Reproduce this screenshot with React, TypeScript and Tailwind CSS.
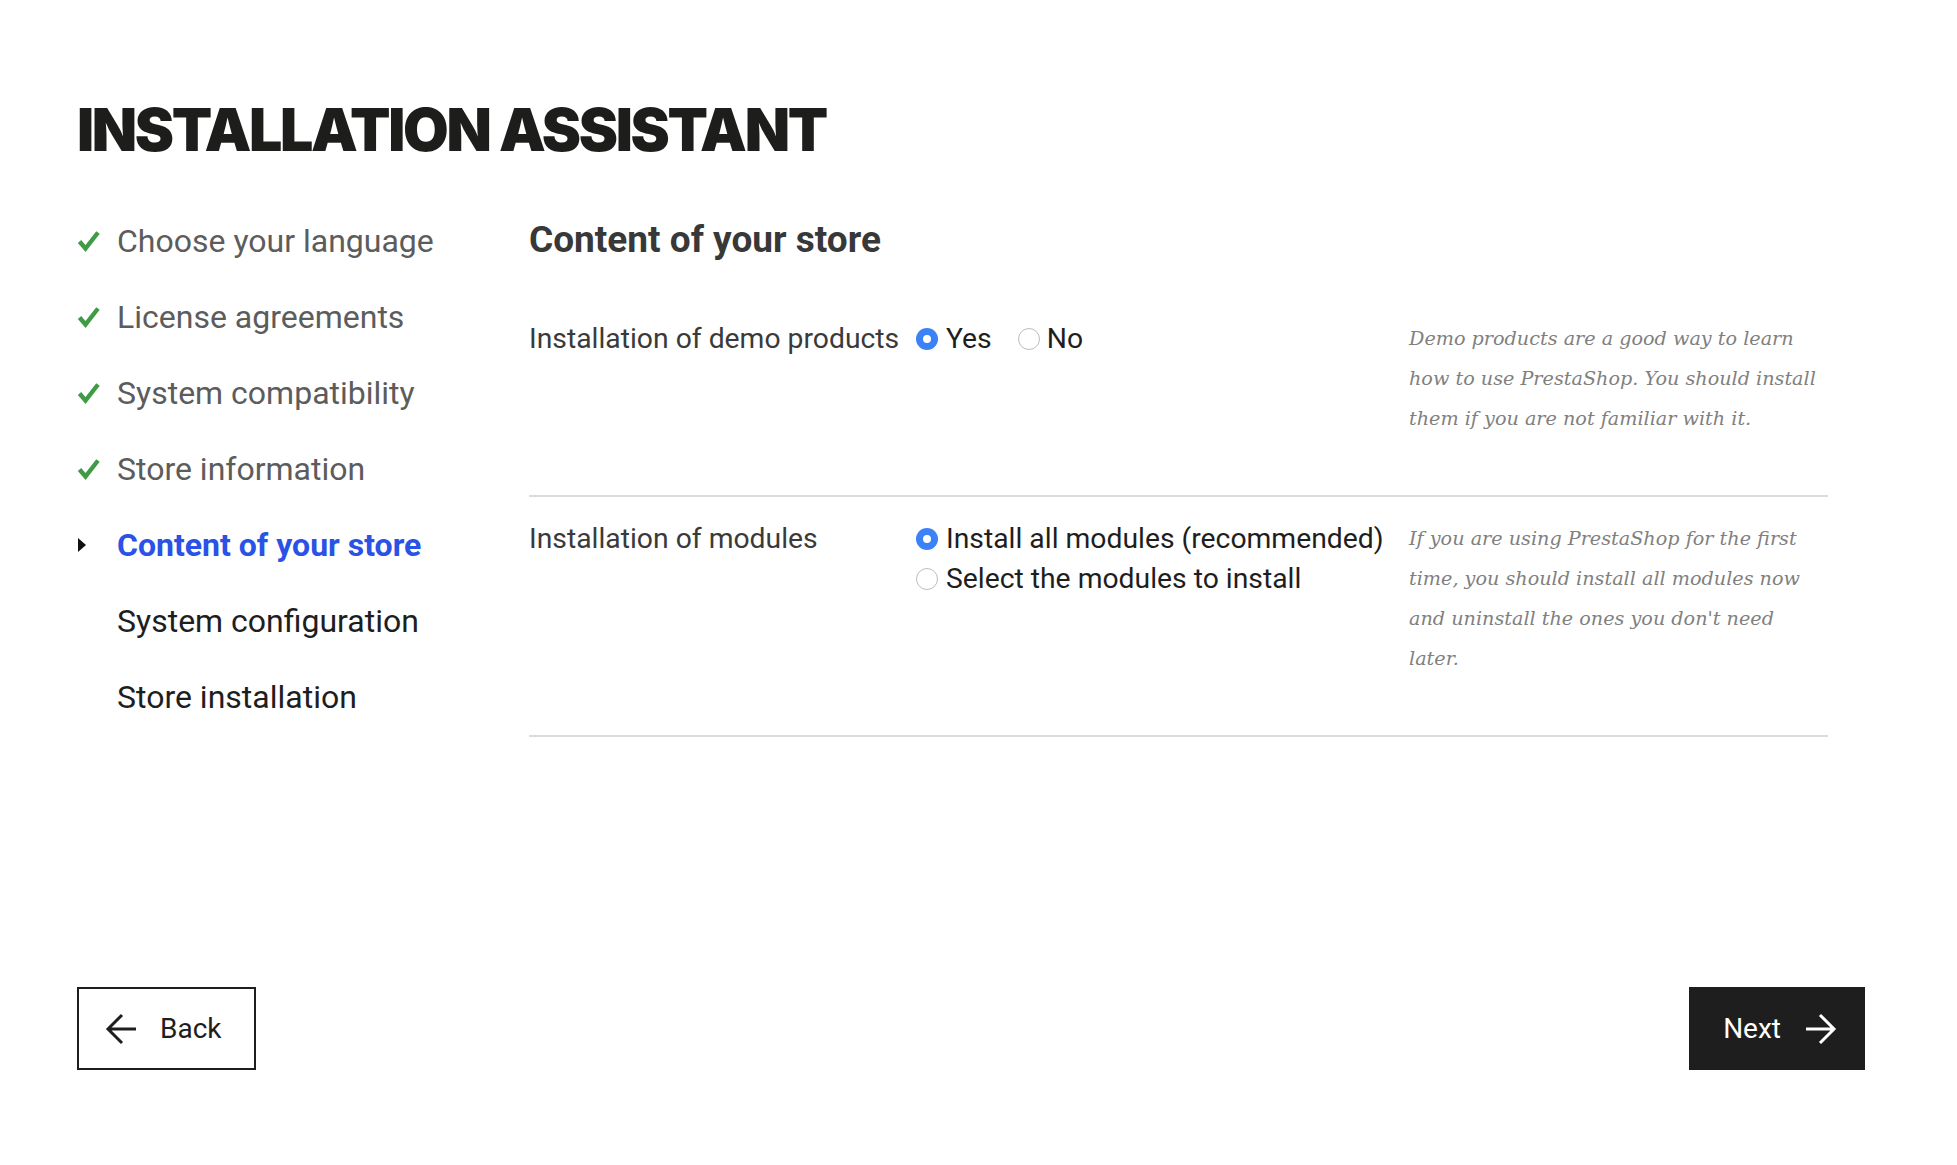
import React from "react";

const sans = { fontFamily: "Roboto, 'Noto Sans', sans-serif" };
const serif = { fontFamily: "'DejaVu Serif', 'Liberation Serif', serif" };

function Check() {
  return (
    <svg width="24" height="24" viewBox="0 0 24 24">
      <path d="M2.5 12.5 L8.5 19.5 L21 3.5" fill="none" stroke="#3f9b45" strokeWidth="4.4" strokeLinecap="butt" strokeLinejoin="miter" />
    </svg>
  );
}

function Triangle() {
  return (
    <svg width="10" height="14" viewBox="0 0 10 14">
      <path d="M1 0 L9 7 L1 14 Z" fill="#111" />
    </svg>
  );
}

function Radio({ checked }: { checked: boolean }) {
  if (checked) {
    return (
      <span className="flex h-[22px] w-[22px] shrink-0 items-center justify-center rounded-full bg-[#3b82f6]">
        <span className="h-[8px] w-[8px] rounded-full bg-white" />
      </span>
    );
  }
  return <span className="block h-[22px] w-[22px] shrink-0 rounded-full border border-[#bdbdbd] bg-white" />;
}

function ArrowLeft({ color }: { color: string }) {
  return (
    <svg width="32" height="32" viewBox="0 0 32 32">
      <path d="M31 16 H3 M17 2 L3 16 L17 30" fill="none" stroke={color} strokeWidth="3" />
    </svg>
  );
}

function ArrowRight({ color }: { color: string }) {
  return (
    <svg width="32" height="32" viewBox="0 0 32 32">
      <path d="M1 16 H29 M15 2 L29 16 L15 30" fill="none" stroke={color} strokeWidth="3" />
    </svg>
  );
}

const steps: { label: string; state: "done" | "active" | "todo" }[] = [
  { label: "Choose your language", state: "done" },
  { label: "License agreements", state: "done" },
  { label: "System compatibility", state: "done" },
  { label: "Store information", state: "done" },
  { label: "Content of your store", state: "active" },
  { label: "System configuration", state: "todo" },
  { label: "Store installation", state: "todo" },
];

export default function App() {
  return (
    <div className="min-h-screen bg-white pl-[77px] pr-[92px] pt-[100px]" style={sans}>
      <h1
        className="h-[60px] text-[59px] font-black leading-[60px] tracking-[-0.04em] text-[#1d1d1b]"
        style={{ fontFamily: "Inter, Roboto, sans-serif" }}
      >
        INSTALLATION ASSISTANT
      </h1>

      <div className="mt-[59px] flex">
        <aside className="flex w-[452px] flex-col gap-[32px]">
          {steps.map((s) => (
            <div key={s.label} className="flex h-[44px] items-center">
              <div className="flex w-[40px] items-center">
                {s.state === "done" && <Check />}
                {s.state === "active" && <Triangle />}
              </div>
              <span
                className={
                  s.state === "done"
                    ? "text-[32px] leading-[44px] text-[#5c5c5c]"
                    : s.state === "active"
                    ? "text-[32px] font-bold leading-[44px] text-[#2a52e6]"
                    : "text-[32px] leading-[44px] text-[#1e1e1e]"
                }
              >
                {s.label}
              </span>
            </div>
          ))}
        </aside>

        <main className="w-[1299px]">
          <h2 className="mb-[36px] h-[42px] text-[37px] font-bold leading-[42px] text-[#383838]">Content of your store</h2>

          <div className="grid grid-cols-[387px_493px_419px] border-b-2 border-[#dcdcdc] pb-[56px] pt-[22px]">
            <div className="text-[28.3px] leading-[40px] text-[#3a3a3a]">Installation of demo products</div>
            <div className="flex h-[40px] items-center text-[28.3px] text-[#1e1e1e]">
              <Radio checked />
              <span className="ml-[8px]">Yes</span>
              <span className="ml-[26px]">
                <Radio checked={false} />
              </span>
              <span className="ml-[7px]">No</span>
            </div>
            <p className="max-w-[410px] text-[19.2px] italic leading-[40px] text-[#808080]" style={serif}>
              Demo products are a good way to learn how to use PrestaShop. You should install them if you are not familiar with it.
            </p>
          </div>

          <div className="grid grid-cols-[387px_493px_419px] border-b-2 border-[#dcdcdc] pb-[56px] pt-[22px]">
            <div className="text-[28.3px] leading-[40px] text-[#3a3a3a]">Installation of modules</div>
            <div className="flex flex-col text-[28.3px] text-[#1e1e1e]">
              <div className="flex h-[40px] items-center">
                <Radio checked />
                <span className="ml-[8px]">Install all modules (recommended)</span>
              </div>
              <div className="flex h-[40px] items-center">
                <Radio checked={false} />
                <span className="ml-[8px]">Select the modules to install</span>
              </div>
            </div>
            <p className="max-w-[410px] text-[19.2px] italic leading-[40px] text-[#808080]" style={serif}>
              If you are using PrestaShop for the first time, you should install all modules now and uninstall the ones you don't need later.
            </p>
          </div>
        </main>
      </div>

      <footer className="mt-[250px] flex justify-between">
        <button className="flex h-[83px] items-center border-2 border-[#1e1e1e] bg-white pl-[26px] pr-[32px] text-[28px] text-[#1e1e1e]">
          <ArrowLeft color="#1e1e1e" />
          <span className="ml-[23px]">Back</span>
        </button>
        <button className="flex h-[83px] items-center bg-[#1e1e1e] pl-[34px] pr-[28px] text-[28px] text-white">
          <span>Next</span>
          <span className="ml-[24px] flex">
            <ArrowRight color="#ffffff" />
          </span>
        </button>
      </footer>
    </div>
  );
}
